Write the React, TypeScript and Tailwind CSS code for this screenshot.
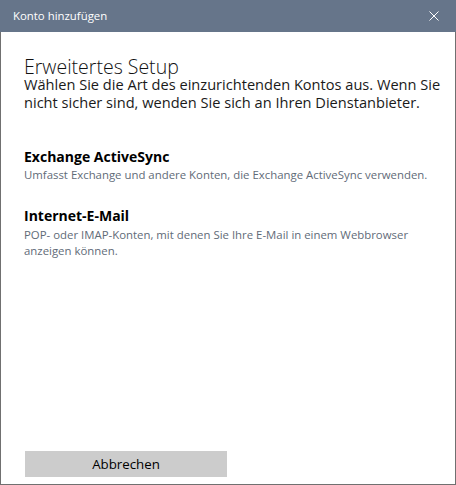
import React from "react";

export default function App() {
  const font = { fontFamily: '"Open Sans", "Noto Sans", sans-serif' };
  return (
    <div
      className="w-[456px] h-[485px] flex flex-col bg-white border-x border-b border-[#707070] text-black"
      style={font}
    >
      <div className="h-[32px] shrink-0 bg-[#66758a] flex items-center justify-between pl-[13px] pr-[17px] -mx-px">
        <span className="text-[11.4px] leading-[16px] text-white">Konto hinzufügen</span>
        <svg width="10" height="10" viewBox="0 0 10 10" className="text-white">
          <path d="M0.5 0.5 L9.5 9.5 M9.5 0.5 L0.5 9.5" stroke="currentColor" strokeWidth="1" />
        </svg>
      </div>
      <div className="flex-1 flex flex-col pl-[23px] pt-[26px]">
        <h1 className="text-[19.5px] leading-[17px] font-light text-[#111]">Erweitertes Setup</h1>
        <p className="text-[14.6px] leading-[18px] text-[#1a1a1a]">
          Wählen Sie die Art des einzurichtenden Kontos aus. Wenn Sie
          <br />
          nicht sicher sind, wenden Sie sich an Ihren Dienstanbieter.
        </p>
        <div className="mt-[37px] text-[14px] leading-[18px] font-bold text-black">Exchange ActiveSync</div>
        <div className="mt-[1px] text-[11.4px] leading-[16px] text-[#5f6b78]">
          Umfasst Exchange und andere Konten, die Exchange ActiveSync verwenden.
        </div>
        <div className="mt-[24px] text-[14px] leading-[18px] font-bold text-black">Internet-E-Mail</div>
        <div className="mt-[2px] text-[11.4px] leading-[16px] text-[#5f6b78]">
          POP- oder IMAP-Konten, mit denen Sie Ihre E-Mail in einem Webbrowser
          <br />
          anzeigen können.
        </div>
        <div className="mt-auto mb-[7px] ml-px">
          <button className="w-[202px] h-[26px] bg-[#cccccc] text-[13.3px] leading-[18px] text-black">
            Abbrechen
          </button>
        </div>
      </div>
    </div>
  );
}
